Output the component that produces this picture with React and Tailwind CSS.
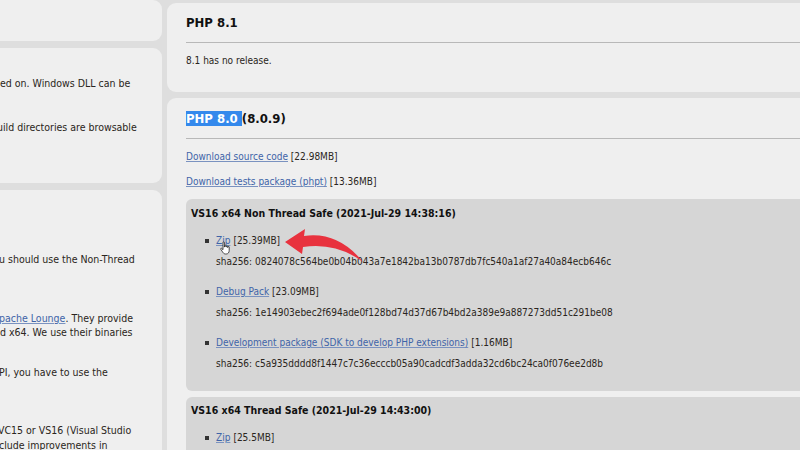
import React from "react";

const font = { fontFamily: '"DejaVu Sans", Verdana, sans-serif', fontStretch: "condensed" };

function Hand() {
  return (
    <svg width="11" height="14" viewBox="0 0 11 14" className="absolute left-[220px] top-[241px]">
      <path d="M3 1.5c0-.8 1.4-.8 1.4 0V6h.3V4.8c0-.8 1.3-.8 1.3 0V6h.3V5.4c0-.8 1.3-.8 1.3 0V6.5h.3V6c0-.8 1.3-.8 1.3 0v3.5c0 1.8-1 3.5-3 3.5H5.5C4 13 3.3 12 2.5 10.8L.8 8.3c-.5-.7.4-1.4 1-.8L3 8.7Z" fill="#fff" stroke="#222" strokeWidth="0.8" />
    </svg>
  );
}

function Arrow() {
  return (
    <svg width="90" height="42" viewBox="0 0 90 42" className="absolute left-[280px] top-[225px]">
      <path d="M5 17 L25 4 L24 11 Q58 6 83 37 Q56 17 23 22 L22 29 Z" fill="#e8323e" />
    </svg>
  );
}

function Bullet({ link, size, sha, first }) {
  return (
    <div className={first ? "mt-[13px]" : "mt-[16px]"}>
      <div className="flex items-center h-[14px] leading-[14px]">
        <span className="ml-[14px] w-[4px] h-[4px] bg-[#333]" />
        <a className="ml-[7px] text-[#3e64a8] underline decoration-[#7a92c0]">{link}</a>
        <span className="ml-[3px]">{size}</span>
      </div>
      <div className="mt-[7px] ml-[25px] h-[14px] leading-[14px] whitespace-nowrap">sha256: {sha}</div>
    </div>
  );
}

export default function App() {
  return (
    <div className="relative w-[800px] h-[450px] overflow-hidden bg-[#dedede] flex gap-[5px] text-[10px] text-[#2a2520]" style={font}>
      <div className="w-[162px] shrink-0 flex flex-col gap-[7px]">
        <div className="shrink-0 h-[41px] bg-[#efefef] rounded-r-[9px]" />
        <div className="shrink-0 h-[135px] bg-[#efefef] rounded-r-[9px] overflow-hidden whitespace-nowrap text-[10.5px]">
          <div className="mt-[28px] h-[14px] leading-[14px]">ed on. Windows DLL can be</div>
          <div className="mt-[30px] h-[14px] leading-[14px] -ml-[3px]">uild directories are browsable</div>
        </div>
        <div className="flex-1 bg-[#efefef] rounded-tr-[9px] overflow-hidden whitespace-nowrap text-[10.5px]">
          <div className="mt-[62px] h-[14px] leading-[14px] -ml-[1px]">u should use the Non-Thread</div>
          <div className="mt-[45px] h-[14px] leading-[14px] -ml-[1px]">
            <a className="text-[#3e64a8] underline decoration-[#7a92c0]">pache Lounge</a>. They provide
          </div>
          <div className="h-[14px] leading-[14px]">d x64. We use their binaries</div>
          <div className="mt-[26px] h-[14px] leading-[14px] -ml-[1px]">PI, you have to use the</div>
          <div className="mt-[44px] h-[14px] leading-[14px] -ml-[2px]">VC15 or VS16 (Visual Studio</div>
          <div className="mt-[1px] h-[14px] leading-[14px] -ml-[1px]">clude improvements in</div>
        </div>
      </div>

      <div className="flex-1 flex flex-col gap-[6px] pt-[3px]">
        <div className="shrink-0 h-[89px] bg-[#efefef] rounded-l-[9px] pl-[19px] pt-[10px]">
          <div className="h-[20px] leading-[20px] text-[13px] font-bold text-[#111]">PHP 8.1</div>
          <div className="mt-[9px] h-px bg-[#b8b8b8]" />
          <div className="mt-[11px] h-[14px] leading-[14px]">8.1 has no release.</div>
        </div>

        <div className="flex-1 bg-[#efefef] rounded-tl-[9px] pl-[19px] pt-[11px]">
          <div className="h-[20px] leading-[20px] text-[13px] font-bold text-[#111]">
            <span className="bg-[#3489ec] text-white">PHP 8.0 </span>(8.0.9)
          </div>
          <div className="mt-[9px] h-px bg-[#b8b8b8]" />
          <div className="mt-[11px] h-[14px] leading-[14px]">
            <a className="text-[#3e64a8] underline decoration-[#7a92c0]">Download source code</a> [22.98MB]
          </div>
          <div className="mt-[11px] h-[14px] leading-[14px]">
            <a className="text-[#3e64a8] underline decoration-[#7a92c0]">Download tests package (phpt)</a> [13.36MB]
          </div>

          <div className="mt-[10px] h-[192px] bg-[#d6d6d6] rounded-l-[6px] pl-[5px] pt-[6px]">
            <div className="h-[16px] leading-[16px] font-bold text-[#111] text-[10.5px]">VS16 x64 Non Thread Safe (2021-Jul-29 14:38:16)</div>
            <Bullet first link="Zip" size="[25.39MB]" sha="0824078c564be0b04b043a7e1842ba13b0787db7fc540a1af27a40a84ecb646c" />
            <Bullet link="Debug Pack" size="[23.09MB]" sha="1e14903ebec2f694ade0f128bd74d37d67b4bd2a389e9a887273dd51c291be08" />
            <Bullet link="Development package (SDK to develop PHP extensions)" size="[1.16MB]" sha="c5a935dddd8f1447c7c36ecccb05a90cadcdf3adda32cd6bc24ca0f076ee2d8b" />
          </div>

          <div className="mt-[6px] h-[80px] bg-[#d6d6d6] rounded-tl-[6px] pl-[5px] pt-[5px]">
            <div className="h-[16px] leading-[16px] font-bold text-[#111] text-[10.5px]">VS16 x64 Thread Safe (2021-Jul-29 14:43:00)</div>
            <div className="mt-[13px] flex items-center h-[14px] leading-[14px]">
              <span className="ml-[14px] w-[4px] h-[4px] bg-[#333]" />
              <a className="ml-[7px] text-[#3e64a8] underline decoration-[#7a92c0]">Zip</a>
              <span className="ml-[3px]">[25.5MB]</span>
            </div>
          </div>
        </div>
      </div>

      <Arrow />
      <Hand />
    </div>
  );
}
